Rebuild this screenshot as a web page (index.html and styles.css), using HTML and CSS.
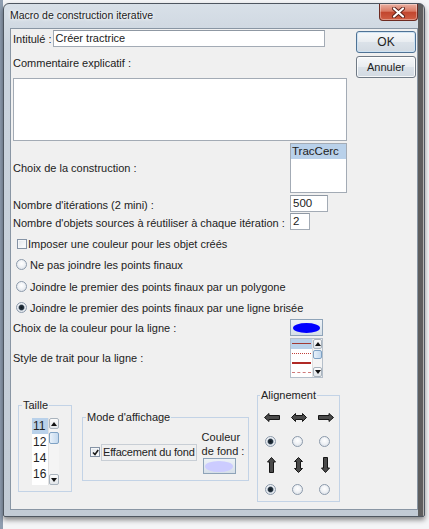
FILE: index.html
```html
<!DOCTYPE html>
<html lang="fr">
<head>
<meta charset="utf-8">
<title>Macro de construction iterative</title>
<link rel="stylesheet" href="styles.css">
</head>
<body>
<div class="window">
  <div class="titlebar">
    <span class="title">Macro de construction iterative</span>
    <div class="close">
      <svg width="15" height="11" viewBox="0 0 15 11"><path d="M3 1.5 L12 9.5 M12 1.5 L3 9.5" stroke="#5a2018" stroke-width="4" stroke-linecap="round"/><path d="M3 1.5 L12 9.5 M12 1.5 L3 9.5" stroke="#fff" stroke-width="2.2" stroke-linecap="round"/></svg>
    </div>
  </div>
  <div class="client">
    <div class="top">
      <div class="form">
        <div class="row r-int"><span class="lab-int">Intitulé :</span><div class="field f-int">Créer tractrice</div></div>
        <div class="row r-com">Commentaire explicatif :</div>
        <div class="textarea"></div>
        <div class="row r-choix">
          <span class="lab">Choix de la construction :</span>
          <div class="list l-constr"><div class="item sel">TracCerc</div></div>
        </div>
        <div class="row r-iter"><span class="lab lab-low">Nombre d'itérations (2 mini) :</span><div class="field f-iter">500</div></div>
        <div class="row r-obj"><span class="lab lab-low">Nombre d'objets sources à réutiliser à chaque itération :</span><div class="field f-obj">2</div></div>
        <div class="row r-check"><span class="checkbox"></span><span>Imposer une couleur pour les objet créés</span></div>
        <div class="row r-radio r-r1"><span class="radio"></span><span>Ne pas joindre les points finaux</span></div>
        <div class="row r-radio r-r2"><span class="radio"></span><span>Joindre le premier des points finaux par un polygone</span></div>
        <div class="row r-radio r-r3"><span class="radio on"></span><span>Joindre le premier des points finaux par une ligne brisée</span></div>
        <div class="row r-color">
          <span class="lab">Choix de la couleur pour la ligne :</span>
          <div class="colorbtn"><span class="ellipse blue"></span></div>
        </div>
        <div class="row r-style">
          <span class="lab">Style de trait pour la ligne :</span>
          <div class="stylelist">
            <div class="styleitems">
              <div class="sitem sel"><span class="ln ln-solid"></span></div>
              <div class="sitem"><span class="ln ln-dot"></span></div>
              <div class="sitem"><span class="ln ln-thick"></span></div>
              <div class="sitem"><span class="ln ln-dash"></span></div>
            </div>
            <div class="sb sb-small">
              <div class="sbtn"><svg width="6" height="4" viewBox="0 0 6 4"><path d="M0 4 L3 0 L6 4 Z" fill="#111"/></svg></div>
              <div class="thumb t-style"></div>
              <div class="track"></div>
              <div class="sbtn"><svg width="6" height="4" viewBox="0 0 6 4"><path d="M0 0 L3 4 L6 0 Z" fill="#111"/></svg></div>
            </div>
          </div>
        </div>
      </div>
      <div class="buttons">
        <button class="btn ok">OK</button>
        <button class="btn annuler">Annuler</button>
      </div>
    </div>

    <div class="bottom">
      <fieldset class="grp g-taille">
        <legend>Taille</legend>
        <div class="taille-body">
          <div class="tlist">
            <div class="titems">
              <div class="titem sel">11</div>
              <div class="titem">12</div>
              <div class="titem">14</div>
              <div class="titem">16</div>
            </div>
            <div class="sb sb-taille">
              <div class="sbtn"><svg width="6" height="4" viewBox="0 0 6 4"><path d="M0 4 L3 0 L6 4 Z" fill="#111"/></svg></div>
              <div class="thumb t-taille"></div>
              <div class="track"></div>
              <div class="sbtn"><svg width="6" height="4" viewBox="0 0 6 4"><path d="M0 0 L3 4 L6 0 Z" fill="#111"/></svg></div>
            </div>
          </div>
        </div>
      </fieldset>

      <fieldset class="grp g-mode">
        <legend>Mode d'affichage</legend>
        <div class="mode-body">
          <span class="checkbox checked"><svg width="7" height="7" viewBox="0 0 7 7"><path d="M1 3.5 L3 5.5 L6.2 1" stroke="#1a1a1a" stroke-width="1.6" fill="none"/></svg></span>
          <span class="efface">Effacement du fond</span>
          <div class="couleur">
            <span class="cl">Couleur</span>
            <span class="cl">de fond :</span>
            <div class="colorbtn cb-fond"><span class="ellipse lav"></span></div>
          </div>
        </div>
      </fieldset>

      <fieldset class="grp g-align">
        <legend>Alignement</legend>
        <div class="align-grid">
          <div class="cell"><svg width="16" height="9" viewBox="0 0 16 9"><path d="M0.5 4.5 L5 0.5 V2.5 H15.5 V6.5 H5 V8.5 Z" fill="#4a4a4a" stroke="#151515"/></svg></div>
          <div class="cell"><svg width="16" height="9" viewBox="0 0 16 9"><path d="M0.5 4.5 L4.5 0.5 V2.5 H11.5 V0.5 L15.5 4.5 L11.5 8.5 V6.5 H4.5 V8.5 Z" fill="#4a4a4a" stroke="#151515"/></svg></div>
          <div class="cell"><svg width="16" height="9" viewBox="0 0 16 9"><path d="M15.5 4.5 L11 0.5 V2.5 H0.5 V6.5 H11 V8.5 Z" fill="#4a4a4a" stroke="#151515"/></svg></div>
          <div class="cell"><span class="radio on"></span></div>
          <div class="cell"><span class="radio"></span></div>
          <div class="cell"><span class="radio"></span></div>
          <div class="cell"><svg width="9" height="16" viewBox="0 0 9 16"><path d="M4.5 0.5 L8.5 5 H6.5 V15.5 H2.5 V5 H0.5 Z" fill="#4a4a4a" stroke="#151515"/></svg></div>
          <div class="cell"><svg width="9" height="16" viewBox="0 0 9 16"><path d="M4.5 0.5 L8.5 4.5 H6.5 V11.5 H8.5 L4.5 15.5 L0.5 11.5 H2.5 V4.5 H0.5 Z" fill="#4a4a4a" stroke="#151515"/></svg></div>
          <div class="cell"><svg width="9" height="16" viewBox="0 0 9 16"><path d="M4.5 15.5 L8.5 11 H6.5 V0.5 H2.5 V11 H0.5 Z" fill="#4a4a4a" stroke="#151515"/></svg></div>
          <div class="cell"><span class="radio on"></span></div>
          <div class="cell"><span class="radio"></span></div>
          <div class="cell"><span class="radio"></span></div>
        </div>
      </fieldset>
    </div>
  </div>
</div>
</body>
</html>
```

FILE: styles.css
```css
* { box-sizing: border-box; }
html, body { margin: 0; padding: 0; }
body {
  width: 429px;
  height: 529px;
  overflow: hidden;
  background: linear-gradient(to right, #8e9db0 0, #8e9db0 3px, #f4f5f7 3px);
  font-family: "Liberation Sans", Arial, sans-serif;
  font-size: 11px;
  color: #222;
}

.window {
  margin: 3px 0 0 3px;
  width: 422px;
  height: 514px;
  border: 1px solid #4e5660;
  border-radius: 6px 6px 2px 2px;
  background:
    linear-gradient(to left, #b4b4b4 0, #b4b4b4 1px, #5e5e5e 1px, #5e5e5e 6px, transparent 6px),
    linear-gradient(#d8e0e8, #cbd4de 40px, #c2cbd5);
  padding: 0 6px 6px 6px;
  box-shadow: 0 3px 5px rgba(0, 0, 0, .45);
  display: flex;
  flex-direction: column;
}

.titlebar {
  height: 24px;
  display: flex;
  justify-content: space-between;
  align-items: flex-start;
}
.title {
  margin-top: 5px;
  font-size: 10.5px;
  color: #1a1a1a;
  text-shadow: 0 0 5px #fff, 0 0 3px #fff;
}
.close {
  width: 39px;
  height: 17px;
  margin-top: 0;
  border: 1px solid #6d2b21;
  border-top: none;
  border-radius: 0 0 4px 4px;
  background: linear-gradient(#eab0a2 0, #d97a64 45%, #c2462e 52%, #cf5e44 100%);
  display: flex;
  align-items: center;
  justify-content: center;
  box-shadow: inset 0 0 0 1px rgba(255, 255, 255, .35);
}

.client {
  height: 482px;
  border: 1px solid #8996a4;
  background: #f0f0f0;
  padding: 0 0 0 2px;
}

.top { display: flex; align-items: flex-start; }
.form { width: 334px; display: flex; flex-direction: column; }
.row { display: flex; align-items: center; white-space: nowrap; }
.lab { width: 277px; flex: none; }
.lab-low { padding-top: 2px; }

.field {
  height: 17px;
  border: 1px solid #a3abb5;
  border-top-color: #8f98a3;
  background: #fff;
  line-height: 15px;
  padding: 0 2px;
  flex: none;
}

.r-int { margin-top: 1px; height: 17px; }
.lab-int { flex: none; }
.f-int { width: 272px; margin-left: 1px; }
.r-com { margin-top: 8px; height: 16px; line-height: 16px; }
.textarea {
  margin-top: 7px;
  height: 63px;
  width: 334px;
  border: 1px solid #a3abb5;
  background: #fff;
}
.r-choix { margin-top: 2px; height: 50px; }
.list {
  border: 1px solid #a3abb5;
  background: #fff;
}
.l-constr { width: 58px; height: 50px; }
.item { height: 15px; line-height: 15px; padding-left: 1px; font-size: 11.5px; }
.item.sel { background: #b9d1ea; }

.r-iter { margin-top: 2px; height: 17px; }
.f-iter { width: 38px; font-size: 11.5px; }
.r-obj { margin-top: 1px; height: 17px; }
.f-obj { width: 20px; font-size: 11.5px; }

.r-check { margin-top: 3px; height: 21px; padding-left: 4px; }
.r-radio { height: 21px; padding-left: 3px; }
.r-r2 { margin-top: 1px; }

.checkbox {
  width: 10px;
  height: 10px;
  border: 1px solid #8593a5;
  background: linear-gradient(135deg, #dfe4ea, #fff);
  box-shadow: inset 0 0 0 1px #f4f6f8;
  margin-right: 1px;
  flex: none;
  display: inline-flex;
  align-items: center;
  justify-content: center;
}
.radio {
  width: 11px;
  height: 11px;
  border-radius: 50%;
  border: 1px solid #8c9aab;
  background: radial-gradient(circle at 50% 40%, #fff 0, #f2f4f7 40%, #d5dce4 100%);
  margin-right: 3px;
  flex: none;
  display: inline-block;
}
.radio.on {
  background:
    radial-gradient(circle at 50% 50%, #101820 0, #263440 2.2px, rgba(80, 100, 120, .5) 3px, transparent 3.5px),
    radial-gradient(circle at 50% 40%, #fff 0, #f2f4f7 40%, #d5dce4 100%);
}

.r-color { margin-top: 1px; height: 17px; }
.colorbtn {
  width: 33px;
  height: 17px;
  border: 1px solid #8ea3b8;
  background: linear-gradient(#edf2f7, #d6dfe8);
  display: flex;
  align-items: center;
  justify-content: center;
  flex: none;
}
.ellipse { width: 27px; height: 10px; border-radius: 50%; }
.ellipse.blue { background: #0000ff; }
.ellipse.lav { background: #ccccff; width: 28px; height: 11px; }

.r-style { margin-top: 2px; height: 40px; }
.stylelist {
  width: 33px;
  height: 40px;
  border: 1px solid #b5bfca;
  display: flex;
  background: #fff;
  flex: none;
}
.styleitems { width: 22px; display: flex; flex-direction: column; }
.sitem { flex: 1; display: flex; align-items: center; padding: 0 1px; }
.sitem.sel { background: #b9d1ea; }
.ln { display: block; width: 100%; }
.ln-solid { border-top: 1px solid #a23a34; }
.ln-dot { border-top: 1px dotted #c0403a; }
.ln-thick { border-top: 2px solid #b02a26; }
.ln-dash { border-top: 1.5px dashed #d07a7a; }

.sb {
  display: flex;
  flex-direction: column;
  background: #f4f4f4;
  border-left: 1px solid #e2e2e2;
}
.sb-small { width: 10px; }
.sbtn {
  height: 10px;
  border: 1px solid #a9b3bd;
  border-radius: 2px;
  background: linear-gradient(#fbfbfb, #e2e6ea);
  display: flex;
  align-items: center;
  justify-content: center;
  flex: none;
}
.thumb {
  border: 1px solid #7fa2c4;
  border-radius: 2px;
  background: linear-gradient(to right, #e8f1fa, #c4d9ee);
  flex: none;
}
.t-style { height: 9px; margin-top: 1px; }
.track { flex: 1; }

.buttons {
  margin-left: 9px;
  margin-top: 2px;
  width: 60px;
  display: flex;
  flex-direction: column;
}
.btn {
  width: 60px;
  height: 22px;
  padding: 0;
  border: 1px solid #707a85;
  border-radius: 3px;
  background: linear-gradient(#f6f8fa 0, #e9edf1 48%, #dbe2e9 52%, #d2dae2 100%);
  box-shadow: inset 0 0 0 1px rgba(255, 255, 255, .8);
  font-family: "Liberation Sans", Arial, sans-serif;
  font-size: 11px;
  color: #222;
}
.ok { font-size: 12px; border-color: #4f7396; box-shadow: inset 0 0 0 1px #cfe3f3; }
.annuler { margin-top: 3px; }

.bottom { display: flex; align-items: flex-start; }
.grp {
  margin: 0;
  padding: 0;
  border: 1px solid #c3d3e6;
  min-width: 0;
}
.grp legend {
  padding: 0 1px;
  font-size: 11px;
  line-height: 12px;
}

.g-taille { margin-top: 21px; margin-left: 5px; width: 54px; }
.g-taille legend { margin-left: 3px; }
.taille-body { padding: 7px 12px 6px 13px; }
.tlist { display: flex; height: 67px; background: #fff; }
.titems { width: 16px; }
.titem { height: 16px; line-height: 16px; font-size: 12px; padding-left: 1px; }
.titem.sel { background: #b9d1ea; }
.sb-taille { width: 11px; }
.sb-taille .sbtn { height: 11px; }
.t-taille { height: 12px; margin-top: 3px; }

.g-mode { margin-top: 33px; margin-left: 10px; width: 167px; }
.g-mode legend { margin-left: 3px; }
.mode-body {
  display: flex;
  align-items: center;
  height: 57px;
  padding: 7px 0 6px 7px;
}
.efface {
  border: 1px solid #c8ced5;
  height: 17px;
  line-height: 15px;
  padding: 0 1px;
  letter-spacing: -0.2px;
  white-space: nowrap;
}
.couleur {
  margin-left: 5px;
  display: flex;
  flex-direction: column;
  align-self: stretch;
}
.cl { line-height: 14px; height: 14px; white-space: nowrap; }
.cb-fond { margin-left: 1px; height: 16px; }

.g-align { margin-top: 11px; margin-left: 8px; width: 83px; }
.g-align legend { margin-left: 2px; }
.align-grid {
  display: grid;
  grid-template-columns: 27px 27px 27px;
  grid-template-rows: 24px 24px 24px 24px;
  padding-top: 4px;
}
.cell { display: flex; align-items: center; justify-content: center; }
.cell svg { display: block; }
.cell .radio { margin: 0 3px 0 0; }
```
